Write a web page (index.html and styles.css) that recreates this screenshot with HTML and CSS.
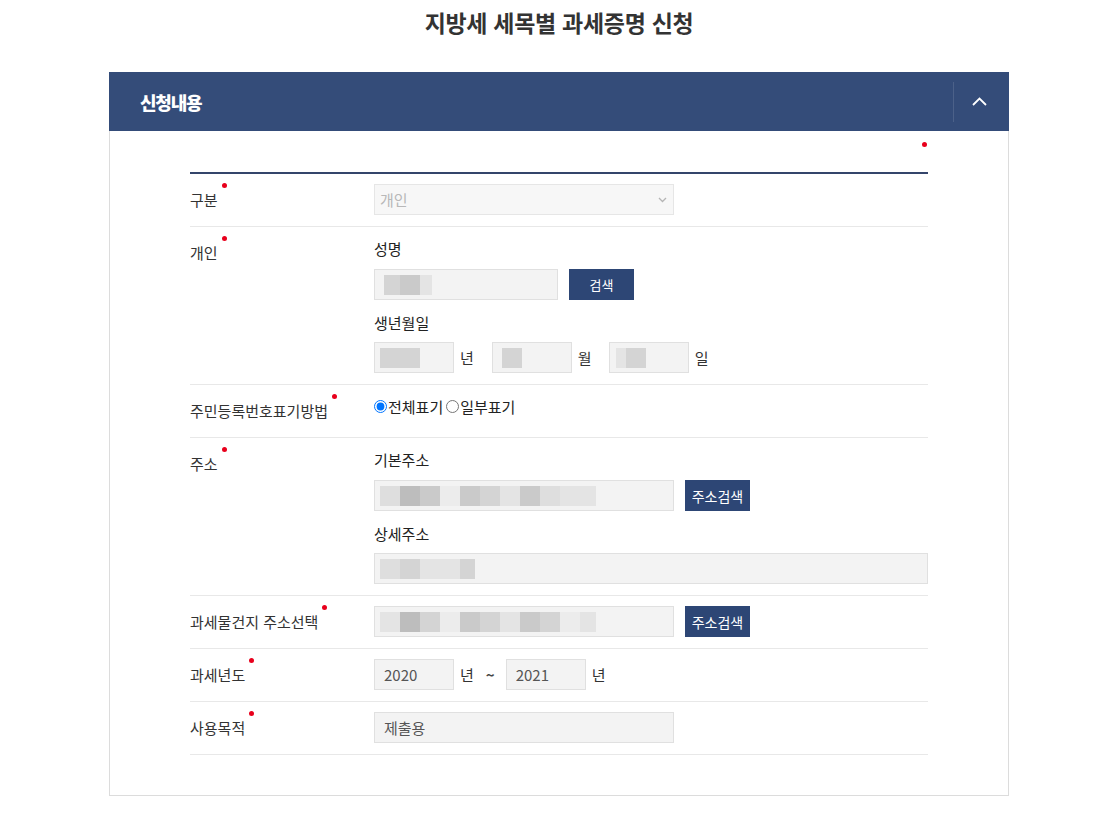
FILE: index.html
```html
<!DOCTYPE html>
<html lang="ko">
<head>
  <meta charset="utf-8">
  <title>지방세 세목별 과세증명 신청</title>
  <link rel="stylesheet" href="styles.css">
</head>
<body>
  <div class="page">
    <h1 class="title">지방세 세목별 과세증명 신청</h1>

    <div class="panel">
      <div class="panel-head">
        <h2>신청내용</h2>
        <div class="toggle">
          <svg width="15" height="9" viewBox="0 0 15 9"><polyline points="1,8 7.5,1.5 14,8" fill="none" stroke="#fff" stroke-width="1.8"/></svg>
        </div>
      </div>

      <div class="panel-body">
        <div class="legend"><span class="dot"></span></div>

        <div class="form">
          <div class="row">
            <div class="th"><span class="req">구분</span></div>
            <div class="td">
              <div class="field select w300">
                <span>개인</span>
                <svg width="9" height="6" viewBox="0 0 9 6"><polyline points="1,1 4.5,4.5 8,1" fill="none" stroke="#b5b5b5" stroke-width="1.3"/></svg>
              </div>
            </div>
          </div>

          <div class="row">
            <div class="th"><span class="req">개인</span></div>
            <div class="td">
              <div class="sub first">성명</div>
              <div class="line">
                <div class="field w184">
                  <span class="mz pad2"><i class="m3 w16"></i><i class="m2"></i><i class="m5 w12"></i></span>
                </div>
                <button class="btn">검색</button>
              </div>
              <div class="sub second">생년월일</div>
              <div class="line">
                <div class="field w80"><span class="mz"><i class="m3 w40"></i></span></div>
                <span class="unit">년</span>
                <div class="field w80 gap"><span class="mz pad2"><i class="m3"></i></span></div>
                <span class="unit">월</span>
                <div class="field w80 gap2"><span class="mz pad3"><i class="m5 w10"></i><i class="m3"></i></span></div>
                <span class="unit">일</span>
              </div>
            </div>
          </div>

          <div class="row">
            <div class="th"><span class="req">주민등록번호표기방법</span></div>
            <div class="td">
              <div class="radios">
                <label><input type="radio" name="rrn" checked>전체표기</label>
                <label class="second-radio"><input type="radio" name="rrn">일부표기</label>
              </div>
            </div>
          </div>

          <div class="row">
            <div class="th"><span class="req">주소</span></div>
            <div class="td">
              <div class="sub first">기본주소</div>
              <div class="line">
                <div class="field w300">
                  <span class="mz"><i class="m4"></i><i class="m1"></i><i class="m2"></i><i class="m6"></i><i class="m2"></i><i class="m3"></i><i class="m5"></i><i class="m2"></i><i class="m4"></i><i class="m5"></i><i class="m5 w16"></i></span>
                </div>
                <button class="btn wide">주소검색</button>
              </div>
              <div class="sub second">상세주소</div>
              <div class="line">
                <div class="field full">
                  <span class="mz"><i class="m4"></i><i class="m3"></i><i class="m5"></i><i class="m5"></i><i class="m3 w15"></i></span>
                </div>
              </div>
            </div>
          </div>

          <div class="row">
            <div class="th"><span class="req">과세물건지 주소선택</span></div>
            <div class="td">
              <div class="line">
                <div class="field w300">
                  <span class="mz"><i class="m5"></i><i class="m1"></i><i class="m3"></i><i class="m6"></i><i class="m2"></i><i class="m3"></i><i class="m5"></i><i class="m2"></i><i class="m3"></i><i class="m6"></i><i class="m5 w16"></i></span>
                </div>
                <button class="btn wide">주소검색</button>
              </div>
            </div>
          </div>

          <div class="row">
            <div class="th"><span class="req">과세년도</span></div>
            <div class="td">
              <div class="line">
                <input class="field w80" type="text" value="2020" readonly>
                <span class="unit">년</span>
                <span class="tilde">~</span>
                <input class="field w80" type="text" value="2021" readonly>
                <span class="unit">년</span>
              </div>
            </div>
          </div>

          <div class="row">
            <div class="th"><span class="req">사용목적</span></div>
            <div class="td">
              <input class="field w300" type="text" value="제출용" readonly>
            </div>
          </div>
        </div>
      </div>
    </div>
  </div>
</body>
</html>
```

FILE: styles.css
```css
* { box-sizing: border-box; }

body {
  margin: 0;
  background: #fff;
  color: #333;
  font-family: "Noto Sans CJK KR", "Malgun Gothic", sans-serif;
  font-size: 15px;
}

.page {
  padding-left: 12px;
}

.title {
  margin: 0;
  padding: 4px 0 32px;
  line-height: 36px;
  font-size: 23px;
  font-weight: bold;
  text-align: center;
  color: #333;
  letter-spacing: -0.3px;
}

.panel {
  width: 900px;
  margin: 0 auto;
}

.panel-head {
  display: flex;
  align-items: center;
  justify-content: space-between;
  height: 59px;
  padding-left: 31px;
  background: #344c79;
  color: #fff;
}

.panel-head h2 {
  margin: 0;
  font-size: 18px;
  font-weight: 900;
  letter-spacing: -1.2px;
}

.toggle {
  display: flex;
  align-items: center;
  justify-content: center;
  width: 56px;
  height: 40px;
  padding-right: 4px;
  border-left: 1px solid rgba(255, 255, 255, 0.12);
}

.panel-body {
  padding: 0 80px 40px;
  border: 1px solid #dcdcdc;
  border-top: 0;
}

.legend {
  display: flex;
  justify-content: flex-end;
  height: 41px;
  padding-top: 11px;
}

.dot {
  width: 5px;
  height: 5px;
  margin-right: 1px;
  border-radius: 50%;
  background: #e8001c;
}

.form {
  border-top: 2px solid #34456b;
}

.row {
  display: flex;
  padding: 10px 0 11px;
  border-bottom: 1px solid #e8e8e8;
}

.th {
  width: 184px;
  flex: none;
  line-height: 31px;
  color: #333;
}

.req {
  position: relative;
  display: inline-block;
}

.req::after {
  content: "";
  position: absolute;
  top: -1px;
  left: 100%;
  margin-left: 4px;
  width: 5px;
  height: 5px;
  border-radius: 50%;
  background: #e8001c;
}

.td {
  flex: 1;
}

.sub {
  line-height: 23px;
  margin-bottom: 9px;
  color: #222;
}

.sub.second {
  margin-top: 11px;
  margin-bottom: 8px;
}

.line {
  display: flex;
  align-items: center;
}

.field {
  display: flex;
  align-items: center;
  height: 31px;
  padding: 0 9px;
  border: 1px solid #e0e0e0;
  background: #f3f3f3;
  color: #555;
  font-family: inherit;
  font-size: 15px;
  outline: none;
}

.select {
  justify-content: space-between;
  padding: 0 6px 0 5px;
  background: #f7f7f7;
  border-color: #e6e6e6;
  color: #b8b8b8;
}

.w300 { width: 300px; }
.w184 { width: 184px; }
.w80 { width: 80px; }
.full { width: 100%; }

.gap { margin-left: 18px; }
.gap2 { margin-left: 17px; }

.unit {
  margin-left: 6px;
  color: #333;
}

.tilde {
  margin: 0 11px 0 12px;
  font-weight: bold;
  color: #444;
}

.btn {
  height: 31px;
  width: 65px;
  margin-left: 11px;
  padding: 0;
  border: 0;
  background: #2d4675;
  color: #fff;
  font-family: inherit;
  font-size: 13px;
}

.btn.wide {
  font-size: 14px;
}

.mz {
  display: flex;
  height: 20px;
  margin-left: -4px;
}

.mz i {
  display: block;
  width: 20px;
  height: 20px;
}

.mz .w40 { width: 40px; }
.mz .w16 { width: 16px; }
.mz .w15 { width: 15px; }
.mz .w12 { width: 12px; }
.mz .w10 { width: 10px; }
.mz.pad2 { margin-left: 0; }
.mz.pad3 { margin-left: -3px; }

.m1 { background: #bdbdbd; }
.m2 { background: #cacaca; }
.m3 { background: #d4d4d4; }
.m4 { background: #dedede; }
.m5 { background: #e4e4e4; }
.m6 { background: #ececec; }

.radios {
  display: flex;
  line-height: 23px;
  color: #222;
}

.radios label {
  display: flex;
  align-items: center;
}

.radios input {
  width: 13px;
  height: 13px;
  margin: 0 1px 0 0;
}

.radios .second-radio {
  margin-left: 3px;
}
```
